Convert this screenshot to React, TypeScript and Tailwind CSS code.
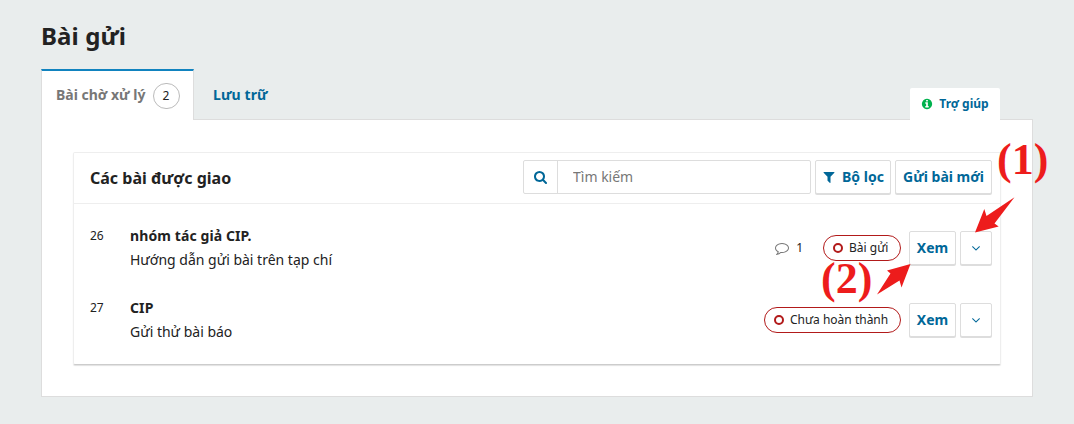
import React from 'react';

const ICONS = {
  search:
    'M1152 832q0-185-131.5-316.5t-316.5-131.5-316.5 131.5-131.5 316.5 131.5 316.5 316.5 131.5 316.5-131.5 131.5-316.5zm512 832q0 52-38 90t-90 38q-54 0-90-38l-343-342q-179 124-399 124-143 0-273.5-55.5t-225-150-150-225-55.5-273.5 55.5-273.5 150-225 225-150 273.5-55.5 273.5 55.5 225 150 150 225 55.5 273.5q0 220-124 399l343 343q37 37 37 90z',
  filter:
    'M1595 295q17 41-14 70l-493 493v742q0 42-39 59-13 5-25 5-27 0-45-19l-256-256q-19-19-19-45v-486l-493-493q-31-29-14-70 17-39 59-39h1280q42 0 59 39z',
  info:
    'M1152 1376v-160q0-14-9-23t-23-9h-96v-512q0-14-9-23t-23-9h-320q-14 0-23 9t-9 23v160q0 14 9 23t23 9h96v320h-96q-14 0-23 9t-9 23v160q0 14 9 23t23 9h448q14 0 23-9t9-23zm-128-896v-160q0-14-9-23t-23-9h-192q-14 0-23 9t-9 23v160q0 14 9 23t23 9h192q14 0 23-9t9-23zm640 416q0 209-103 385.5t-279.5 279.5-385.5 103-385.5-103-279.5-279.5-103-385.5 103-385.5 279.5-279.5 385.5-103 385.5 103 279.5 279.5 103 385.5z',
  comment:
    'M896 384q-204 0-381.5 69.5t-282 187.5-104.5 255q0 112 71.5 213.5t201.5 175.5l87 50-27 96q-24 91-70 172 152-63 275-171l43-38 57 6q69 8 130 8 204 0 381.5-69.5t282-187.5 104.5-255-104.5-255-282-187.5-381.5-69.5zm896 512q0 174-120 321.5t-326 233-450 85.5q-70 0-145-8-198 175-460 242-49 14-114 22h-5q-15 0-27-10.5t-16-27.5v-1q-3-4-.5-12t2-10 4.5-9.5l6-9 7-8.5 8-9q7-8 31-34.5t34.5-38 31-39.5 32.5-51 27-59 26-76q-157-89-247.5-220t-90.5-281q0-174 120-321.5t326-233 450-85.5 450 85.5 326 233 120 321.5z',
  angleDown:
    'M1395 736q0 13-10 23l-466 466q-10 10-23 10t-23-10l-466-466q-10-10-10-23t10-23l50-50q10-10 23-10t23 10l393 393 393-393q10-10 23-10t23 10l50 50q10 10 10 23z',
};

function Icon({ name, className }: { name: keyof typeof ICONS; className?: string }) {
  return (
    <svg viewBox="0 0 1792 1792" fill="currentColor" className={className} aria-hidden="true">
      <path d={ICONS[name]} />
    </svg>
  );
}

function Button({ className = '', children, label }: { className?: string; children: React.ReactNode; label?: string }) {
  return (
    <button
      aria-label={label}
      className={`flex items-center justify-center bg-white border border-[#ddd] rounded-[2px] shadow-[0_1px_0_#ddd] text-sm font-bold text-[#006798] whitespace-nowrap shrink-0 ${className}`}
    >
      {children}
    </button>
  );
}

type Submission = { id: number; author: string; title: string; comments?: number; status: string };

const submissions: Submission[] = [
  { id: 26, author: 'nhóm tác giả CIP.', title: 'Hướng dẫn gửi bài trên tạp chí', comments: 1, status: 'Bài gửi' },
  { id: 27, author: 'CIP', title: 'Gửi thử bài báo', status: 'Chưa hoàn thành' },
];

function SubmissionRow({ item }: { item: Submission }) {
  return (
    <li className="flex h-[72px] pl-4 pr-2 pt-3">
      <span className="w-10 text-xs leading-6">{item.id}</span>
      <div className="flex-1 text-sm leading-6">
        <div className="font-bold tracking-[0.1px]">{item.author}</div>
        <div>{item.title}</div>
      </div>
      <div className="flex h-[34px] items-center mt-[7px]">
        {item.comments && (
          <span className="flex items-center text-xs mr-5">
            <Icon name="comment" className="size-[14px] mr-[7px] text-[#777]" />
            {item.comments}
          </span>
        )}
        <span
          className={`flex h-[26px] items-center rounded-full border border-[#b21a1a] pl-[9px] text-xs ${
            item.comments ? 'w-[78px]' : 'w-[137px]'
          }`}
        >
          <span className="size-[10px] shrink-0 rounded-full border-2 border-[#b21a1a] mr-[6px]" />
          <span className="whitespace-nowrap">{item.status}</span>
        </span>
        <Button className="ml-2 h-[34px] w-[47px]">Xem</Button>
        <Button className="ml-1 h-[34px] w-8" label="Mở rộng">
          <Icon name="angleDown" className="size-[14px]" />
        </Button>
      </div>
    </li>
  );
}

export default function App() {
  return (
    <div className="relative h-[424px] w-[1074px] overflow-hidden bg-[#e9eded] pl-[41px] pt-[18px] font-['Noto_Sans',sans-serif] text-[#222]">
      <h1 className="text-2xl font-bold leading-9 tracking-[0.1px]">Bài gửi</h1>

      <div className="mt-[15px] flex h-[51px] w-[992px] items-end">
        <div className="z-10 -mb-px flex h-[51px] w-[153px] items-center self-start border-x border-t-2 border-x-[#ddd] border-t-[#1183bf] bg-white pl-[14px] text-sm font-bold text-[#777] whitespace-nowrap">
          <span className="-mt-[2px]">Bài chờ xử lý</span>
          <span className="ml-[7px] flex h-[26px] w-[27px] items-center justify-center rounded-full border border-[#bbb] text-xs font-normal text-[#222]">
            2
          </span>
        </div>
        <a className="ml-[19px] self-center text-sm font-bold text-[#006798] tracking-[0.1px]">Lưu trữ</a>
        <button className="z-10 ml-auto mr-[33px] flex h-8 w-[90px] items-center justify-center rounded-t-[2px] bg-white text-xs font-bold text-[#006798] whitespace-nowrap">
          <Icon name="info" className="mr-[6px] size-3 text-[#00b24e]" />
          Trợ giúp
        </button>
      </div>

      <main className="-mt-px h-[278px] w-[992px] border border-[#ddd] bg-white px-8 pt-8">
        <section className="h-[213px] w-[928px] -ml-px rounded-[2px] border border-[#eee] border-b-[#ccc] shadow-[0_1px_1px_rgba(0,0,0,0.12)]">
          <header className="flex h-[51px] items-center border-b border-[#eee] pl-4 pr-2">
            <h2 className="text-base font-bold">Các bài được giao</h2>
            <div className="-mt-[2px] ml-auto flex">
              <div className="flex h-[34px] w-[288px] rounded-[2px] border border-[#ddd]">
                <span className="flex w-[34px] items-center justify-center border-r border-[#ddd] text-[#006798]">
                  <Icon name="search" className="size-[14px]" />
                </span>
                <input
                  type="search"
                  placeholder="Tìm kiếm"
                  className="min-w-0 flex-1 px-[15px] text-sm outline-none placeholder:text-[#777]"
                />
              </div>
              <Button className="ml-1 h-[34px] w-[76px]">
                <Icon name="filter" className="mr-[6px] size-[14px]" />
                Bộ lọc
              </Button>
              <Button className="ml-1 h-[34px] w-[97px]">Gửi bài mới</Button>
            </div>
          </header>
          <ul className="pt-2">
            {submissions.map((item) => (
              <SubmissionRow key={item.id} item={item} />
            ))}
          </ul>
        </section>
      </main>

      {/* numbered step markers over the page */}
      <span className="absolute left-[997px] top-[135px] z-20 font-['Liberation_Serif',serif] text-[44px] font-bold leading-[50px] text-[#ed1c1c]">
        (1)
      </span>
      <span className="absolute left-[821px] top-[254px] z-20 font-['Liberation_Serif',serif] text-[44px] font-bold leading-[50px] text-[#ed1c1c]">
        (2)
      </span>
      <svg className="absolute inset-0 z-20" width="1074" height="424" fill="#ed1c1c" aria-hidden="true">
        <path d="M975 232.500L984.300 209L986.500 216L1014.500 197.200L994.500 223.500L998.700 226.500Z" />
        <path d="M910.500 264L901.500 287.500L899.500 280.500L877 294.500L890.500 273.500L887 270.500Z" />
      </svg>
    </div>
  );
}
